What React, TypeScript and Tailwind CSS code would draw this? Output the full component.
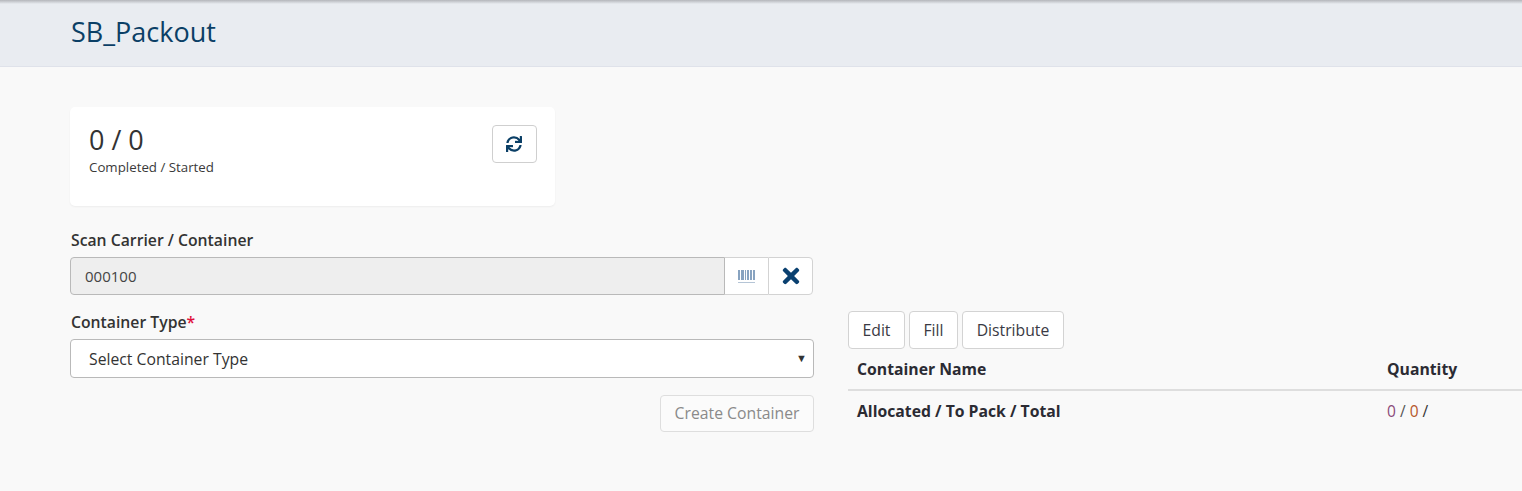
import { FaSync, FaTimes } from 'react-icons/fa'

function BarcodeIcon() {
  const bars = [0, 1, 3, 4, 5, 7, 9, 10, 12, 13, 15, 16]
  return (
    <svg width="17" height="13" viewBox="0 0 17 13">
      {bars.map((x) => (
        <rect key={x} x={x} y="0" width="1" height="10" fill="#88a3c0" />
      ))}
      <rect x="0" y="12" width="17" height="1" fill="#b5c5d6" />
    </svg>
  )
}

function ActionButton({ label, width }: { label: string; width: string }) {
  return (
    <button className={`${width} h-[38px] pt-[2px] bg-white border border-[#d3d3d3] rounded-[4px] text-[15.75px] text-[#3a3a44]`}>
      {label}
    </button>
  )
}

export default function App() {
  return (
    <div className="h-[491px] overflow-hidden bg-[#f9f9f9] font-['Open_Sans',sans-serif] text-[#2b2b2b]">
      <header className="h-[67px] bg-[#e9ecf1] border-b border-[#dfe2ea]">
        <div className="h-[4px] bg-gradient-to-b from-[#b4b6bb] to-[#e9ecf1]" />
        <h1 className="pl-[71px] pt-[8px] text-[27px] leading-[40px] text-[#0b3f66]">SB_Packout</h1>
      </header>

      <main className="pl-[70px] pt-[40px] flex gap-[34px]">
        <div className="w-[744px] shrink-0">
          <section className="w-[485px] h-[99px] bg-white rounded-[5px] shadow-[0_1px_2px_rgba(0,0,0,0.05)] pl-[19px] pr-[18px] pt-[17px] flex justify-between items-start">
            <div>
              <div className="text-[27px] leading-[32px] text-[#333]">0 / 0</div>
              <div className="text-[13.3px] leading-[18px] mt-[2px] text-[#3a3a3a]">Completed / Started</div>
            </div>
            <button className="w-[45px] h-[38px] mt-[1px] bg-white border border-[#cfcfcf] rounded-[4px] flex items-center justify-center text-[#0b3f66]">
              <FaSync className="w-[16px] h-[16px] -mt-[1px] -ml-[1px]" />
            </button>
          </section>

          <label className="block mt-[23px] pl-[1px] text-[15.75px] leading-[22px] font-semibold text-[#333]">
            Scan Carrier / Container
          </label>
          <div className="mt-[6px] flex h-[38px] w-[743px]">
            <div className="flex-1 bg-[#eeeeee] border border-[#b9b9b9] rounded-l-[4px] pl-[14px] flex items-center text-[15px] text-[#444]">
              000100
            </div>
            <div className="w-[43px] bg-white border-y border-[#d3d3d3] flex items-center justify-center">
              <BarcodeIcon />
            </div>
            <button className="w-[45px] bg-white border border-[#d3d3d3] rounded-r-[4px] flex items-center justify-center text-[#0a4070]">
              <FaTimes className="w-[24px] h-[24px]" />
            </button>
          </div>

          <label className="block mt-[16px] pl-[1px] text-[15.75px] leading-[22px] font-semibold text-[#333]">
            Container Type<span className="text-[#e0103a]">*</span>
          </label>
          <div className="mt-[6px] h-[39px] bg-white border border-[#b9b9b9] rounded-[4px] pl-[18px] pr-[6px] flex items-center justify-between text-[15.75px] text-[#333]">
            <span className="pt-[2px]">Select Container Type</span>
            <span className="text-[11px] text-[#333]">▼</span>
          </div>

          <div className="mt-[17px] flex justify-end">
            <button className="h-[37px] w-[154px] bg-[#fbfbfb] border border-[#dedede] rounded-[4px] text-[15.75px] text-[#8a8a8a]">
              Create Container
            </button>
          </div>
        </div>

        <div className="flex-1 pt-[204px]">
          <div className="flex gap-[4px]">
            <ActionButton label="Edit" width="w-[57px]" />
            <ActionButton label="Fill" width="w-[49px]" />
            <ActionButton label="Distribute" width="w-[102px]" />
          </div>
          <div className="flex border-b-2 border-[#dedede] h-[42px] pt-[1px] items-center pl-[9px] text-[15.75px] font-bold text-[#2b2b33]">
            <span className="w-[530px]">Container Name</span>
            <span>Quantity</span>
          </div>
          <div className="flex h-[41px] items-center pl-[9px] text-[15.75px]">
            <span className="w-[530px] font-bold text-[#2b2b33]">Allocated / To Pack / Total</span>
            <span className="text-[15.5px]">
              <span className="text-[#8a4a7a]">0</span>
              <span className="text-[#555]"> / </span>
              <span className="text-[#b5562a]">0</span>
              <span className="text-[#333]"> /</span>
            </span>
          </div>
        </div>
      </main>
    </div>
  )
}
